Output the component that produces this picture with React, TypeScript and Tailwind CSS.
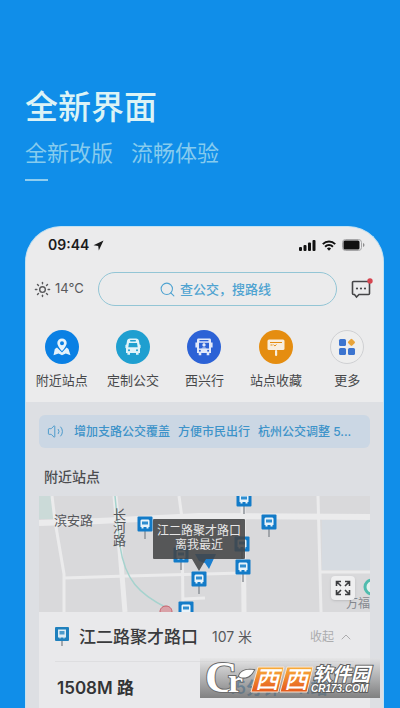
import type React from "react";
import { ChevronUp, Search, Sun, Volume2 } from "lucide-react";

const StatusIcons: React.FC = () => (
  <div className="flex items-center gap-[6px] text-[#111111]">
    <svg width="17" height="12" viewBox="0 0 17 12" fill="currentColor">
      <rect x="0" y="8" width="3" height="4" rx="1" />
      <rect x="4.5" y="6" width="3" height="6" rx="1" />
      <rect x="9" y="3.5" width="3" height="8.5" rx="1" />
      <rect x="13.5" y="1" width="3" height="11" rx="1" />
    </svg>
    <svg width="14" height="11" viewBox="0 0 14 11" fill="none" stroke="currentColor" strokeWidth="2">
      <path d="M0.8 4.1a8.8 8.8 0 0 1 12.4 0" />
      <path d="M3.1 6.7a5.5 5.5 0 0 1 7.8 0" />
      <path d="M7 10.8 4.9 8.6a3 3 0 0 1 4.2 0z" fill="currentColor" stroke="none" />
    </svg>
    <svg width="23" height="12" viewBox="0 0 23 12">
      <rect x="0.5" y="0.5" width="19" height="11" rx="3" fill="none" stroke="#a5a5a7" />
      <rect x="1.5" y="1.5" width="16" height="9" rx="1.5" fill="currentColor" />
      <path d="M21 4v4c2-.8 2-3.2 0-4z" fill="#8b8b8d" />
    </svg>
  </div>
);

const NearbyIcon = () => (
  <svg width="20" height="20" viewBox="0 0 20 20" fill="#e4f2fb">
    <path d="M5 10.5 2.8 12 1.5 18.2l5-1.6 3.5 1.6 3.8-1.6 4.7 1.6L16.5 12 14.6 10.6 10 15.6z" />
    <path
      fillRule="evenodd"
      d="M10 1.4a4.7 4.7 0 0 0-4.7 4.7c0 3.2 4.7 8.1 4.7 8.1s4.7-4.9 4.7-8.1A4.7 4.7 0 0 0 10 1.4zm0 2.8a2 2 0 1 1 0 4 2 2 0 0 1 0-4z"
    />
  </svg>
);

const CustomBusIcon = () => (
  <svg width="20" height="20" viewBox="0 0 20 20">
    <path
      fill="#e0f3f9"
      d="M7 1.500h6c1.800 0 2.700 1 3 2.600l.6 3.400 1 .4v3l-.6.400V16h-1.400v1.800h-2.600V16H7v1.800H4.400V16H3v-4.700l-.6-.4v-3l1-.4L4 4.100C4.300 2.500 5.200 1.500 7 1.500z"
    />
    <rect x="7" y="3" width="6" height="1.400" rx="0.700" fill="#21a0cf" />
    <path d="M6 6h8l.7 4.300H5.300z" fill="#21a0cf" />
    <circle cx="6" cy="13.300" r="1" fill="#21a0cf" />
    <circle cx="14" cy="13.300" r="1" fill="#21a0cf" />
  </svg>
);

const XixingIcon = () => (
  <svg width="20" height="20" viewBox="0 0 20 20">
    <path
      fill="#e2e9f9"
      d="M4.500 1.600h11c1 0 1.500.6 1.500 1.500v2.400h1.600v5H17V16h-1.700v2.200h-2.600V16H7.300v2.200H4.700V16H3v-5.500H1.400v-5H3V3.100c0-.9.500-1.500 1.500-1.500z"
    />
    <rect x="5.500" y="3" width="9" height="1.300" fill="#2c62d6" />
    <path d="M5 5.800h10v5.800H5z" fill="#2c62d6" />
    <path d="M10 6.300c1 0 1.600.7 1.600 1.600S11 9.500 10 9.500s-1.600-.7-1.600-1.600.6-1.600 1.600-1.600zM7.200 11.600c.3-1.500 5.300-1.500 5.600 0z" fill="#e2e9f9" />
    <circle cx="5.900" cy="13.800" r="1" fill="#2c62d6" />
    <circle cx="14.100" cy="13.800" r="1" fill="#2c62d6" />
  </svg>
);

const FavoriteIcon = () => (
  <svg width="20" height="20" viewBox="0 0 20 20">
    <rect x="1.500" y="2.500" width="17" height="10.500" rx="1.500" fill="#f8eedd" />
    <rect x="9" y="13" width="2.200" height="6" rx="1" fill="#f8eedd" />
    <path d="M4 5.500h12M4.500 8h2M7.500 7.600l1.400 1.400L10.500 7.500" fill="none" stroke="#e58d10" strokeWidth="1" />
  </svg>
);

const MoreIcon = () => (
  <svg width="18" height="18" viewBox="0 0 18 18" fill="#3c74cf">
    <rect x="1" y="1" width="7" height="7" rx="1.500" />
    <rect x="1" y="10" width="7" height="7" rx="1.500" />
    <rect x="10" y="10" width="7" height="7" rx="1.500" />
    <path d="M12.600 1.300 10.300 3.600a1.200 1.200 0 0 0 0 1.700l2.300 2.300a1.200 1.200 0 0 0 1.700 0l2.300-2.300a1.200 1.200 0 0 0 0-1.700l-2.300-2.300a1.200 1.200 0 0 0-1.700 0z" fill="#e8a43a" />
  </svg>
);

const shortcuts = [
  { label: "附近站点", color: "bg-[#0a80e4]", icon: <NearbyIcon /> },
  { label: "定制公交", color: "bg-[#1f9fd0]", icon: <CustomBusIcon /> },
  { label: "西兴行", color: "bg-[#2c62d6]", icon: <XixingIcon /> },
  { label: "站点收藏", color: "bg-[#e58d10]", icon: <FavoriteIcon /> },
  { label: "更多", color: "border border-[#cfd0d3] bg-[#eeeeee]", icon: <MoreIcon /> },
];

const StopSign: React.FC<{ x: number; y: number }> = ({ x, y }) => (
  <g transform={`translate(${x} ${y})`}>
    <path d="M0 7v8" stroke="#8c9298" strokeWidth="1.500" />
    <rect x="-7.500" y="-7.500" width="15" height="15" rx="1" fill="#127bc8" />
    <path d="M-3.500-4.500h7l1 1V3h-1v1.500h-2V3h-3v1.500h-2V3h-1v-6.500z" fill="#e8f3fa" />
    <rect x="-3" y="-2.500" width="6" height="3" fill="#2f8ed0" />
  </g>
);

const stopsUnder = [
  { x: 142, y: 59 },
  { x: 203, y: 48 },
];

const stops = [
  { x: 106, y: 28 },
  { x: 205, y: 3 },
  { x: 230, y: 26 },
  { x: 204, y: 71 },
  { x: 160, y: 83 },
  { x: 147, y: 113 },
];

const StopMap: React.FC = () => (
  <div className="relative h-[116px] overflow-hidden bg-[#d9d9db]">
    <svg className="h-full w-full" viewBox="0 0 332 116" preserveAspectRatio="xMinYMin slice">
      <path d="M0 0h12l3 23H0z" fill="#cbdad8" />
      <path d="M283 24h49v50h-49z" fill="#d6dbe1" />
      <g fill="none" stroke="#ebebec">
        <path d="M0 27 60 25 160 20 332 21" strokeWidth="6" />
        <path d="M13 0 16 25 25 78v38" strokeWidth="3" />
        <path d="M76 0 81 54 86 116" strokeWidth="5" />
        <path d="M25 82 88 80 204 77M281 76h51" strokeWidth="3" />
        <path d="M140 0 143 22 144 116M144 103 166 102" strokeWidth="3" />
        <path d="M204 0 205 116" strokeWidth="5" />
        <path d="M279 0 282 116" strokeWidth="3" />
      </g>
      <path d="M76 0 81 50C86 84 100 98 128 112" fill="none" stroke="#a5d3ce" strokeWidth="1.500" />
      <path d="M121 116c0-4 3-6 6-6s6 2 6 6" fill="#d9a2a8" stroke="#c65d69" />
      <circle cx="333" cy="91" r="7" fill="#e3f1ee" stroke="#4fbcae" strokeWidth="3" />
      {stopsUnder.map((stop) => (
        <StopSign key={stop.x} x={stop.x} y={stop.y} />
      ))}
      <path d="M156 58h21l-7 15-4-6-6-2z" fill="#1a7fd0" />
      <path d="M115 23h90a1 1 0 0 1 1 1v38a1 1 0 0 1-1 1h-38l-7 12-7-12h-38a1 1 0 0 1-1-1V24a1 1 0 0 1 1-1z" fill="#434446" fillOpacity="0.880" />
      {stops.map((stop) => (
        <StopSign key={stop.x} x={stop.x} y={stop.y} />
      ))}
    </svg>
    <span className="absolute top-4 left-[15px] text-[13px] leading-4 text-[#55565a]">滨安路</span>
    <span className="absolute top-3 left-[74px] w-[13px] text-[13px] leading-[13px] text-[#55565a]">长河路</span>
    <p className="absolute top-7 left-[114px] w-[92px] text-center text-[12px] leading-[14px] text-[#e6e6e6]">
      江二路聚才路口
      <br />
      离我最近
    </p>
    <span className="absolute right-0 bottom-0 text-[12px] leading-4 whitespace-nowrap text-[#85888e]">万福</span>
    <button
      type="button"
      aria-label="展开地图"
      className="absolute right-[15px] bottom-3 flex size-6 items-center justify-center rounded bg-[#efeff0] shadow-sm"
    >
      <svg width="16" height="16" viewBox="0 0 16 16" fill="none" stroke="#3c3d40" strokeWidth="1.600">
        <path d="M1.500 6V1.500H6M1.500 1.500 6 6M10 1.500h4.500V6M14.500 1.500 10 6M1.500 10v4.500H6M1.500 14.500 6 10M10 14.500h4.500V10M14.500 14.500 10 10" />
      </svg>
    </button>
  </div>
);

const Watermark: React.FC = () => (
  <div className="absolute right-5 bottom-[10px] h-10 w-[180px] bg-linear-to-b from-[#e2e2e2]/40 to-[#6f6f6f]/85">
    <svg width="180" height="40" viewBox="0 0 180 40">
      <defs>
        <linearGradient id="orange" x1="0" y1="0" x2="0" y2="1">
          <stop offset="0" stopColor="#f9ae3b" />
          <stop offset="1" stopColor="#e4581c" />
        </linearGradient>
      </defs>
      <g fill="#ffffff" stroke="#6b6b6b" strokeWidth="2" paintOrder="stroke" fontFamily="Liberation Serif, serif" fontWeight="700">
        <text x="5" y="34" fontSize="45">C</text>
        <text x="28" y="34" fontSize="34">r</text>
        <path d="M39 18c2-6 8-7 15-6-3 6-8 9-14 7z" />
      </g>
      <path d="M58 9h26l-6 25H51z" fill="url(#orange)" stroke="#f8e4d2" />
      <path d="M87 9h26l-6 25H80z" fill="url(#orange)" stroke="#f8e4d2" />
      <g fontFamily="Noto Sans CJK SC, sans-serif" fill="#ffffff" fontStyle="italic">
        <text x="55" y="30" fontSize="24" fontWeight="500">西</text>
        <text x="84" y="30" fontSize="24" fontWeight="500">西</text>
        <text x="113" y="23" fontSize="19" fontWeight="700" stroke="#5f5f5f" strokeWidth="2" paintOrder="stroke">软件园</text>
      </g>
      <text
        x="111"
        y="34"
        fontSize="10"
        fontWeight="700"
        fontStyle="italic"
        fontFamily="Liberation Sans, sans-serif"
        fill="#ffffff"
        stroke="#5f5f5f"
        strokeWidth="2"
        paintOrder="stroke"
      >
        CR173.COM
      </text>
    </svg>
  </div>
);

const App: React.FC = () => {
  return (
    <div className="relative flex min-h-screen flex-col bg-[#108ee9] pr-4 pl-[25px] font-['Inter','Noto_Sans_CJK_SC',sans-serif]">
      <header className="flex flex-col pt-[87px] pb-[45px]">
        <h1 className="text-[33px] leading-10 font-medium text-[#dcf3f6]">全新界面</h1>
        <p className="mt-[14px] flex gap-[18px] text-[22px] leading-6 text-[#86cbee]">
          <span>全新改版</span>
          <span>流畅体验</span>
        </p>
        <div className="mt-[14px] h-[2px] w-[23px] bg-[#8fcdef]" />
      </header>

      <main className="flex flex-1 flex-col overflow-hidden rounded-t-[36px] border border-b-0 border-[#c3e2f2] bg-[#dddfe3]">
        <section className="bg-[#ebebec] pb-3">
          <div className="flex h-9 items-center justify-between pr-[18px] pl-[22px]">
            <div className="flex items-center gap-1 text-[14px] leading-5 font-semibold text-[#1b1b1b]">
              09:44
              <svg width="11" height="11" viewBox="0 0 11 11" fill="currentColor">
                <path d="M10.500 0.500 0.500 5.200l4.700.7.600 4.600z" />
              </svg>
            </div>
            <StatusIcons />
          </div>

          <div className="mt-[9px] flex items-center pr-[10px] pl-2">
            <div className="flex w-16 items-center gap-1 text-[13px] text-[#59595b]">
              <Sun size={17} strokeWidth={2} />
              14°C
            </div>
            <label className="flex h-[34px] flex-1 items-center justify-center gap-1 rounded-full border border-[#93c5d5] text-[#4fa3d1]">
              <Search size={17} strokeWidth={1.5} />
              <input
                type="text"
                aria-label="搜索"
                placeholder="查公交，搜路线"
                className="w-24 bg-transparent text-[13px] leading-5 font-medium outline-none placeholder:text-[#4fa3d1] placeholder:opacity-100"
              />
            </label>
            <button type="button" aria-label="消息" className="ml-[14px]">
              <svg width="22" height="22" viewBox="0 0 22 22">
                <path d="M2.500 3.500h15a1 1 0 0 1 1 1v11a1 1 0 0 1-1 1H8l-2.500 2.500L3.500 16.500h-1a1 1 0 0 1-1-1v-11a1 1 0 0 1 1-1z" fill="none" stroke="#454547" strokeWidth="1.600" />
                <g fill="#454547">
                  <circle cx="6" cy="10.500" r="1.100" />
                  <circle cx="10" cy="10.500" r="1.100" />
                  <circle cx="14" cy="10.500" r="1.100" />
                </g>
                <circle cx="19" cy="3" r="2.700" fill="#d64550" />
              </svg>
            </button>
          </div>

          <nav className="mt-6 grid grid-cols-5">
            {shortcuts.map((item) => (
              <button key={item.label} type="button" className="flex flex-col items-center gap-[6px]">
                <span className={`flex size-[34px] items-center justify-center rounded-full ${item.color}`}>{item.icon}</span>
                <span className="text-[13px] leading-5 text-[#47484a]">{item.label}</span>
              </button>
            ))}
          </nav>
        </section>

        <section className="flex flex-1 flex-col px-[13px] pt-[13px]">
          <a href="#notice" className="flex h-[33px] items-center gap-[10px] rounded-md bg-[#cbd7e4] px-2 text-[#3d93c9]">
            <Volume2 size={17} strokeWidth={1.25} />
            <span className="flex gap-2 text-[12px] leading-5 font-medium whitespace-nowrap">
              <span>增加支路公交覆盖</span>
              <span>方便市民出行</span>
              <span>杭州公交调整 5...</span>
            </span>
          </a>
          <h2 className="mt-[19px] mb-[9px] px-[5px] text-[14px] leading-5 font-medium text-[#4c4d50]">附近站点</h2>

          <StopMap />

          <div className="flex-1 bg-[#e9e9eb] px-4">
            <div className="flex h-[50px] items-center border-b border-[#dedee0]">
              <svg width="14" height="20" viewBox="0 0 14 20">
                <path d="M7 14v5" stroke="#8c9298" strokeWidth="1.500" />
                <rect width="14" height="14" rx="1" fill="#1f80bd" />
                <path d="M3 2.500h8v8H9.500v1h-1v-1h-3v1h-1v-1H3z" fill="#dcebf4" />
                <rect x="4.500" y="4" width="5" height="3.500" fill="#4a9acb" />
              </svg>
              <h3 className="ml-[10px] text-[17px] leading-6 font-medium text-[#3a3b3d]">江二路聚才路口</h3>
              <span className="ml-[14px] text-[14px] leading-5 text-[#58595b]">107 米</span>
              <button type="button" className="ml-auto flex items-center gap-1 text-[12px] leading-5 text-[#acacae]">
                收起
                <ChevronUp size={16} strokeWidth={1.5} />
              </button>
            </div>
            <div className="flex items-center pt-[14px] text-[17px] leading-6 font-semibold text-[#333436]">
              <span className="w-[173px] pl-[2px]">1508M 路</span>
              <span className="flex gap-4 text-[#2f82c0]">
                <span>15分钟</span>
                <span>11站</span>
              </span>
            </div>
          </div>
        </section>
      </main>

      <Watermark />
    </div>
  );
};

export default App;
